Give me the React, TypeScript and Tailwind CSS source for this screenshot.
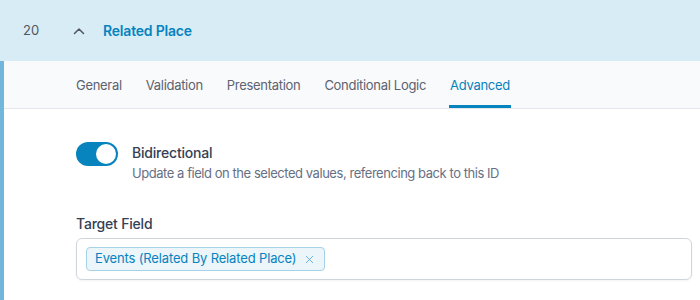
import { X } from 'lucide-react'

const tabs = ['General', 'Validation', 'Presentation', 'Conditional Logic', 'Advanced']

export default function App() {
  return (
    <div className="w-[700px] h-[300px] overflow-hidden bg-white" style={{ fontFamily: 'Inter, "Noto Sans", sans-serif' }}>
      {/* Field header */}
      <div className="h-[61px] bg-[#d8ecf6] flex items-center">
        <span className="w-[73px] pl-[23px] text-[13px] text-[#50575e]">20</span>
        <svg width="12" height="8" viewBox="0 0 12 8" fill="none">
          <path d="M1.5 6.5L6 2L10.5 6.5" stroke="#50575e" strokeWidth="1.5" strokeLinecap="round" strokeLinejoin="round" />
        </svg>
        <span className="ml-[18px] text-[14px] font-semibold text-[#0783be] tracking-[-0.2px]">Related Place</span>
      </div>

      <div className="flex h-[239px]">
        <div className="w-[4px] bg-[#72b6dc] shrink-0" />
        <div className="flex-1 flex flex-col">
          {/* Tabs */}
          <div className="h-[48px] bg-[#f9fafb] border-b border-[#e4e7ec] flex items-end pl-[72px] gap-[24px] tracking-[-0.3px]">
            {tabs.map((t) => (
              <div
                key={t}
                className={
                  t === 'Advanced'
                    ? 'h-full flex items-center text-[13px] text-[#0783be] border-b-[3px] border-[#0783be] pt-[6px] -mx-[1px] px-[1px]'
                    : 'h-full flex items-center text-[13px] text-[#5c6270] border-b-[3px] border-transparent pt-[6px]'
                }
              >
                {t}
              </div>
            ))}
          </div>

          {/* Body */}
          <div className="pl-[72px] pr-[4px] pt-[33px]">
            <div className="flex items-start gap-[14px]">
              <div className="w-[42px] h-[24px] rounded-full bg-[#0783be] flex items-center justify-end pr-[2px]">
                <div className="w-[20px] h-[20px] rounded-full bg-white" />
              </div>
              <div className="flex flex-col mt-[1px]">
                <span className="text-[14px] font-medium text-[#344054] leading-[20px] tracking-[-0.2px]">Bidirectional</span>
                <span className="text-[13px] text-[#667085] leading-[20px] tracking-[-0.45px]">Update a field on the selected values, referencing back to this ID</span>
              </div>
            </div>

            <div className="mt-[31px] text-[14px] font-medium text-[#344054] leading-[20px] tracking-[-0.2px]">Target Field</div>
            <div className="mt-[4px] w-[616px] h-[42px] rounded-[6px] border border-[#d0d5dd] shadow-[0_1px_2px_rgba(16,24,40,0.05)] flex items-center px-[9px]">
              <div className="h-[24px] flex items-center gap-[7px] px-[8px] rounded-[4px] bg-[#ebf5fa] border border-[#a5d2e7] text-[13px] text-[#0783be] tracking-[-0.15px]">
                <span>Events (Related By Related Place)</span>
                <X size={13} strokeWidth={1.6} className="text-[#5aa9d4]" />
              </div>
            </div>
          </div>
        </div>
      </div>
    </div>
  )
}
